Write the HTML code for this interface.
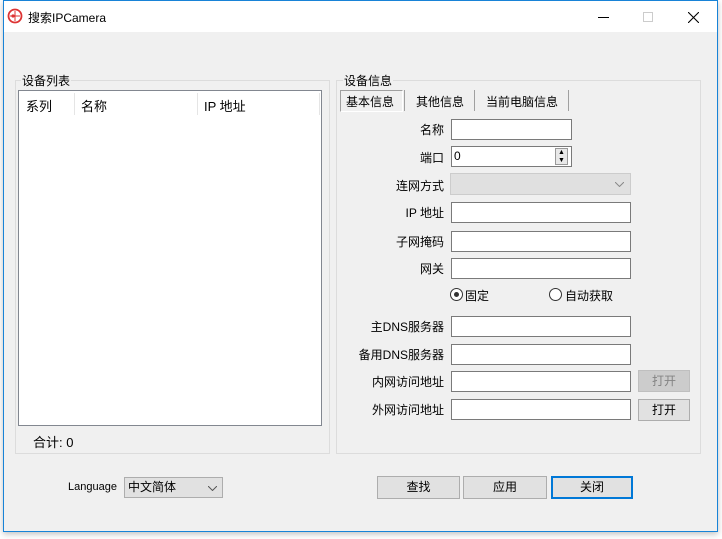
<!DOCTYPE html>
<html><head><meta charset="utf-8"><style>
*{box-sizing:border-box;margin:0;padding:0}
body{width:722px;height:539px;background:#fff;position:relative;overflow:hidden;font-family:"Liberation Sans","Microsoft YaHei","Noto Sans CJK SC",sans-serif;font-size:12px;color:#000}
.a{position:absolute}
.win{left:3px;top:0;width:715px;height:532px;border:1px solid #1883d7;background:#f0f0f0;box-shadow:0 2px 6px rgba(0,0,0,.25)}
.tb{left:4px;top:1px;width:713px;height:31px;background:#fff}
.grp{border:1px solid #dcdcdc}
.lbl{background:#f0f0f0;padding:0 1px;line-height:14px}
.in{background:#fff;border:1px solid #7a7a7a;height:21px}
.r{text-align:right;width:110px;left:334px;line-height:14px}
.btn{background:#e1e1e1;border:1px solid #adadad;text-align:center;line-height:20px}
</style></head><body>
<div class="a win"></div>
<div class="a tb"></div>
<svg class="a" style="left:7px;top:8px" width="16" height="16" viewBox="0 0 16 16"><circle cx="8" cy="8" r="6.5" fill="none" stroke="#d33" stroke-width="1.8"/><line x1="3" y1="8" x2="13" y2="8" stroke="#d33"/><line x1="8" y1="3" x2="8" y2="13" stroke="#d33"/><circle cx="6" cy="8" r="1.6" fill="#d33"/></svg>
<div class="a" style="left:28px;top:9px;font-size:12px">搜索IPCamera</div>
<div class="a" style="left:598px;top:17px;width:11px;height:1px;background:#000"></div>
<div class="a" style="left:643px;top:12px;width:10px;height:10px;border:1px solid #ccc"></div>
<svg class="a" style="left:688px;top:12px" width="11" height="11"><path d="M0 0L11 11M11 0L0 11" stroke="#000" stroke-width="1.1"/></svg>

<div class="a grp" style="left:15px;top:80px;width:315px;height:374px"></div>
<div class="a lbl" style="left:21px;top:74px">设备列表</div>
<div class="a" style="left:18px;top:90px;width:304px;height:336px;background:#fff;border:1px solid #828790"></div>
<div class="a" style="left:26px;top:96px;font-size:13px">系列</div>
<div class="a" style="left:74px;top:93px;width:1px;height:22px;background:#e5e5e5"></div>
<div class="a" style="left:81px;top:96px;font-size:13px">名称</div>
<div class="a" style="left:197px;top:93px;width:1px;height:22px;background:#e5e5e5"></div>
<div class="a" style="left:204px;top:96px;font-size:13px">IP 地址</div>
<div class="a" style="left:319px;top:93px;width:1px;height:22px;background:#e5e5e5"></div>
<div class="a" style="left:33px;top:432px;font-size:13px">合计: 0</div>

<div class="a grp" style="left:336px;top:80px;width:365px;height:374px"></div>
<div class="a lbl" style="left:343px;top:74px">设备信息</div>
<div class="a" style="left:340px;top:90px;width:63px;height:22px;border:1px solid #a0a0a0;border-right-color:#fff;border-bottom-color:#fff;background:#f0f0f0"></div>
<div class="a" style="left:346px;top:93px">基本信息</div>
<div class="a" style="left:404px;top:90px;width:1px;height:21px;background:#a0a0a0"></div>
<div class="a" style="left:416px;top:93px">其他信息</div>
<div class="a" style="left:474px;top:90px;width:1px;height:21px;background:#a0a0a0"></div>
<div class="a" style="left:486px;top:93px">当前电脑信息</div>
<div class="a" style="left:568px;top:90px;width:1px;height:21px;background:#a0a0a0"></div>

<div class="a r" style="top:123px">名称</div><div class="a in" style="left:451px;top:119px;width:121px"></div>
<div class="a r" style="top:151px">端口</div><div class="a in" style="left:451px;top:146px;width:121px;padding-left:2px;line-height:19px">0</div>
<div class="a" style="left:555px;top:148px;width:13px;height:17px;border:1px solid #999;background:#e8e8e8;font-size:7px;line-height:8px;text-align:center">▲<br>▼</div>
<div class="a r" style="top:179px">连网方式</div><div class="a" style="left:450px;top:173px;width:181px;height:22px;border:1px solid #ccc;background:#e0e0e0"><svg class="a" style="right:6px;top:8px" width="9" height="5"><path d="M0 0L4.5 4.5L9 0" stroke="#888" fill="none"/></svg></div>
<div class="a r" style="top:206px">IP 地址</div><div class="a in" style="left:451px;top:202px;width:180px"></div>
<div class="a r" style="top:235px">子网掩码</div><div class="a in" style="left:451px;top:231px;width:180px"></div>
<div class="a r" style="top:262px">网关</div><div class="a in" style="left:451px;top:258px;width:180px"></div>
<div class="a" style="left:450px;top:288px;width:13px;height:13px;border:1px solid #333;border-radius:50%;background:#fff"><div class="a" style="left:3px;top:3px;width:5px;height:5px;border-radius:50%;background:#333"></div></div>
<div class="a" style="left:465px;top:287px">固定</div>
<div class="a" style="left:549px;top:288px;width:13px;height:13px;border:1px solid #333;border-radius:50%;background:#fff"></div>
<div class="a" style="left:565px;top:287px">自动获取</div>
<div class="a r" style="top:320px">主DNS服务器</div><div class="a in" style="left:451px;top:316px;width:180px"></div>
<div class="a r" style="top:348px">备用DNS服务器</div><div class="a in" style="left:451px;top:344px;width:180px"></div>
<div class="a r" style="top:375px">内网访问地址</div><div class="a in" style="left:451px;top:371px;width:180px"></div>
<div class="a btn" style="left:638px;top:370px;width:52px;height:22px;background:#ccc;border-color:#bfbfbf;color:#838383">打开</div>
<div class="a r" style="top:403px">外网访问地址</div><div class="a in" style="left:451px;top:399px;width:180px"></div>
<div class="a btn" style="left:638px;top:399px;width:52px;height:22px">打开</div>

<div class="a" style="left:68px;top:481px;font-size:11px">Language</div>
<div class="a" style="left:124px;top:477px;width:99px;height:21px;border:1px solid #adadad;background:#e1e1e1;padding-left:3px;line-height:19px">中文简体<svg class="a" style="right:5px;top:8px" width="9" height="5"><path d="M0 0L4.5 4.5L9 0" stroke="#555" fill="none"/></svg></div>
<div class="a btn" style="left:377px;top:476px;width:83px;height:23px">查找</div>
<div class="a btn" style="left:463px;top:476px;width:84px;height:23px">应用</div>
<div class="a btn" style="left:551px;top:476px;width:82px;height:23px;border:2px solid #0078d7;line-height:19px">关闭</div>
</body></html>
